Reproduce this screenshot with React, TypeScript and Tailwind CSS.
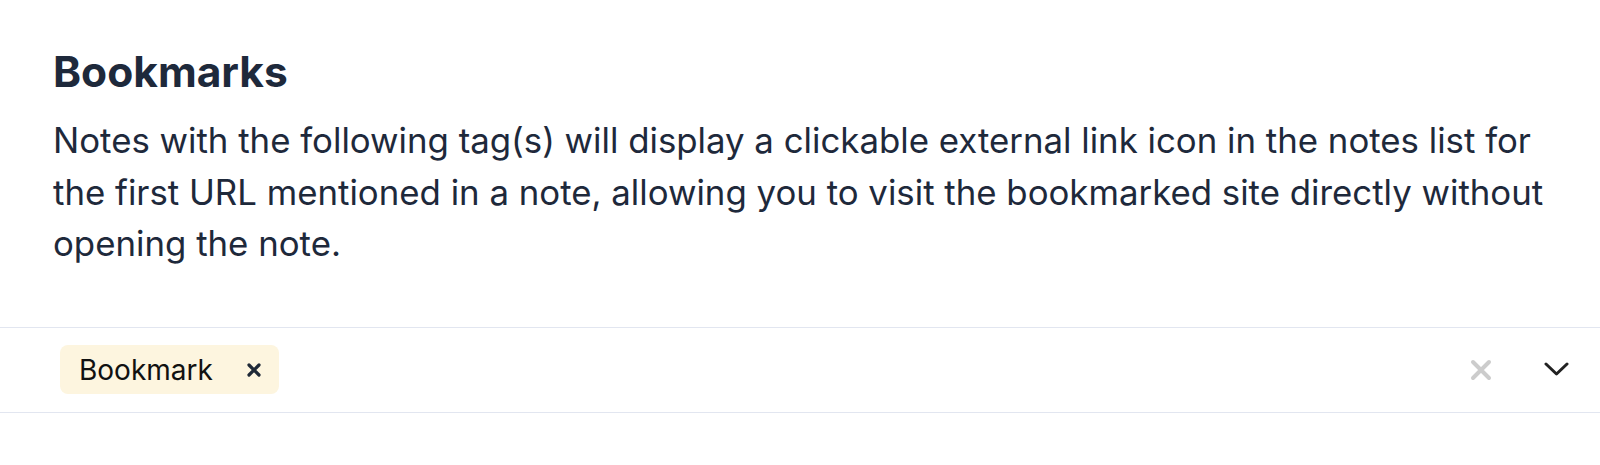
import React from "react";

export default function App() {
  return (
    <div className="w-[1600px] h-[465px] bg-white" style={{ fontFamily: "Inter, 'Noto Sans', sans-serif" }}>
      <div className="pl-[53px] pr-[36px] pt-[45px]">
        <h1 className="text-[42.5px] leading-[53px] font-bold text-[#1e293b]">Bookmarks</h1>
        <p className="mt-[17px] text-[34.8px] leading-[51.5px] text-[#1e293b]">
          Notes with the following tag(s) will display a clickable external link icon in the notes list for the first URL mentioned in a note, allowing you to visit the bookmarked site directly without opening the note.
        </p>
      </div>
      <div className="mt-[57px] border-y border-[#e2e6f0] h-[86px] flex items-center pl-[60px] pr-[31px]">
        <div className="flex items-center h-[49px] w-[219px] rounded-[8px] bg-[#fdf5df] pl-[19px] pr-[17px]">
          <span className="text-[28px] text-[#111111]">Bookmark</span>
          <span className="ml-auto flex items-center">
            <svg width="16" height="16" viewBox="0 0 16 16">
              <path d="M3 3 L13 13 M13 3 L3 13" stroke="#1f2937" strokeWidth="3.2" strokeLinecap="round" />
            </svg>
          </span>
        </div>
        <div className="ml-auto flex items-center gap-[52px]">
          <svg width="22" height="22" viewBox="0 0 22 22">
            <path d="M3 3 L19 19 M19 3 L3 19" stroke="#cccccc" strokeWidth="4" strokeLinecap="round" />
          </svg>
          <svg width="25" height="15" viewBox="0 0 25 15">
            <path d="M2 2 L12.5 12 L23 2" stroke="#222222" strokeWidth="3" fill="none" strokeLinecap="round" strokeLinejoin="round" />
          </svg>
        </div>
      </div>
    </div>
  );
}
